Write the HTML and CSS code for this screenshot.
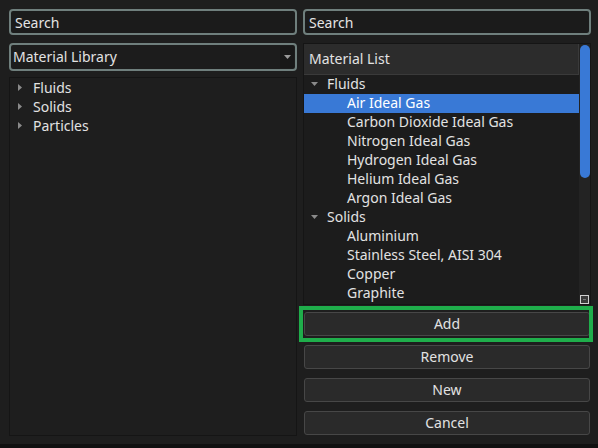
FILE: index.html
```html
<!DOCTYPE html>
<html>
<head>
<meta charset="utf-8">
<link rel="stylesheet" href="styles.css">
</head>
<body>
<div class="app">
  <div class="col">
    <div class="search">Search</div>
    <div class="combo">
      <span class="combo-text">Material Library</span>
      <span class="combo-btn"><svg width="7" height="4" viewBox="0 0 7 4"><path d="M0 0H7L3.5 4Z" fill="#9a9a9a"/></svg></span>
    </div>
    <div class="tree">
      <div class="trow"><svg class="rarr" width="4" height="7" viewBox="0 0 4 7"><path d="M0 0L4 3.5L0 7Z" fill="#8a8a8a"/></svg><span>Fluids</span></div>
      <div class="trow"><svg class="rarr" width="4" height="7" viewBox="0 0 4 7"><path d="M0 0L4 3.5L0 7Z" fill="#8a8a8a"/></svg><span>Solids</span></div>
      <div class="trow"><svg class="rarr" width="4" height="7" viewBox="0 0 4 7"><path d="M0 0L4 3.5L0 7Z" fill="#8a8a8a"/></svg><span>Particles</span></div>
    </div>
  </div>
  <div class="col">
    <div class="search">Search</div>
    <div class="list">
      <div class="list-body">
        <div class="list-head">Material List</div>
        <div class="lrow group"><svg class="darr" width="7" height="4" viewBox="0 0 7 4"><path d="M0 0H7L3.5 4Z" fill="#8a8a8a"/></svg><span>Fluids</span></div>
        <div class="lrow child sel">Air Ideal Gas</div>
        <div class="lrow child">Carbon Dioxide Ideal Gas</div>
        <div class="lrow child">Nitrogen Ideal Gas</div>
        <div class="lrow child">Hydrogen Ideal Gas</div>
        <div class="lrow child">Helium Ideal Gas</div>
        <div class="lrow child">Argon Ideal Gas</div>
        <div class="lrow group"><svg class="darr" width="7" height="4" viewBox="0 0 7 4"><path d="M0 0H7L3.5 4Z" fill="#8a8a8a"/></svg><span>Solids</span></div>
        <div class="lrow child">Aluminium</div>
        <div class="lrow child">Stainless Steel, AISI 304</div>
        <div class="lrow child">Copper</div>
        <div class="lrow child">Graphite</div>
      </div>
      <div class="scroll">
        <div class="thumb"></div>
        <div class="grip"><div class="grip-in"></div></div>
      </div>
    </div>
    <div class="buttons">
      <div class="btn focus">Add</div>
      <div class="btn">Remove</div>
      <div class="btn">New</div>
      <div class="btn">Cancel</div>
    </div>
  </div>
</div>
<div class="footer"></div>
</body>
</html>
```
FILE: styles.css
```css
html, body {
  margin: 0;
  padding: 0;
  background: #1e1e1e;
  font-family: "Noto Sans", "Open Sans", sans-serif;
  font-size: 14px;
  color: #e2e2e2;
  overflow: hidden;
}
.app {
  height: 444px;
  box-sizing: border-box;
  padding: 9px 7px 0 9px;
  display: grid;
  grid-template-columns: 288px 288px;
  column-gap: 6px;
}
.col {
  display: flex;
  flex-direction: column;
}
.search {
  height: 26px;
  box-sizing: border-box;
  border: 2px solid #6f7f7d;
  border-radius: 4px;
  background: #1b1b1b;
  padding-left: 4px;
  line-height: 23px;
  color: #e4e4e4;
}
.combo {
  margin-top: 8px;
  height: 28px;
  box-sizing: border-box;
  border: 2px solid #6f7f7d;
  border-radius: 4px;
  background: #1c1c1c;
  display: flex;
  align-items: stretch;
}
.combo-text {
  flex: 1;
  padding-left: 2px;
  line-height: 24px;
}
.combo-btn {
  width: 14px;
  margin: 1px 1px 1px 0;
  background: #181818;
  display: flex;
  align-items: center;
  justify-content: center;
}
.tree {
  margin-top: 6px;
  height: 359px;
  box-sizing: border-box;
  border: 1px solid #151515;
  background: #1e1e1e;
}
.trow {
  height: 19px;
  display: flex;
  align-items: center;
}
.rarr {
  margin-left: 8px;
  margin-right: 11px;
}
.list {
  margin-top: 8px;
  height: 262px;
  box-sizing: border-box;
  border: 1px solid #151515;
  display: flex;
  background: #1c1c1c;
}
.list-body {
  flex: 1;
}
.list-head {
  height: 31px;
  box-sizing: border-box;
  background: #2c2c2c;
  border-bottom: 1px solid #3a3a3a;
  border-right: 1px solid #3a3a3a;
  padding-left: 5px;
  line-height: 30px;
}
.lrow {
  height: 19px;
  box-sizing: border-box;
  padding-bottom: 2px;
  display: flex;
  align-items: center;
  white-space: nowrap;
}
.darr {
  margin-left: 7px;
  margin-right: 9px;
}
.child {
  padding-left: 43px;
}
.sel {
  background: #3979d6;
  color: #ffffff;
}
.scroll {
  width: 11px;
  background: #232323;
  display: flex;
  flex-direction: column;
  align-items: center;
}
.thumb {
  width: 10px;
  height: 133px;
  margin-top: 1px;
  background: #3979d6;
  border-radius: 5px;
}
.grip {
  margin-top: auto;
  margin-bottom: 0;
  width: 9px;
  height: 9px;
  box-sizing: border-box;
  border: 1px solid #d0d0d0;
  background: #3a3a3a;
  display: flex;
  align-items: center;
  justify-content: center;
}
.grip-in {
  width: 3px;
  height: 1px;
  background: #777;
}
.buttons {
  margin-top: 7px;
  display: flex;
  flex-direction: column;
  gap: 9px;
}
.btn {
  height: 24px;
  box-sizing: border-box;
  border: 1px solid #474747;
  border-radius: 3px;
  background: #2a2a2a;
  text-align: center;
  line-height: 22px;
  color: #e2e2e2;
  margin-left: 1px;
  margin-right: 1px;
}
.focus {
  position: relative;
}
.focus::after {
  content: "";
  position: absolute;
  top: -7px;
  bottom: -7px;
  left: -6px;
  right: -4px;
  border: 4px solid #1fae4b;
}
.footer {
  height: 4px;
  background: #111111;
}
```
